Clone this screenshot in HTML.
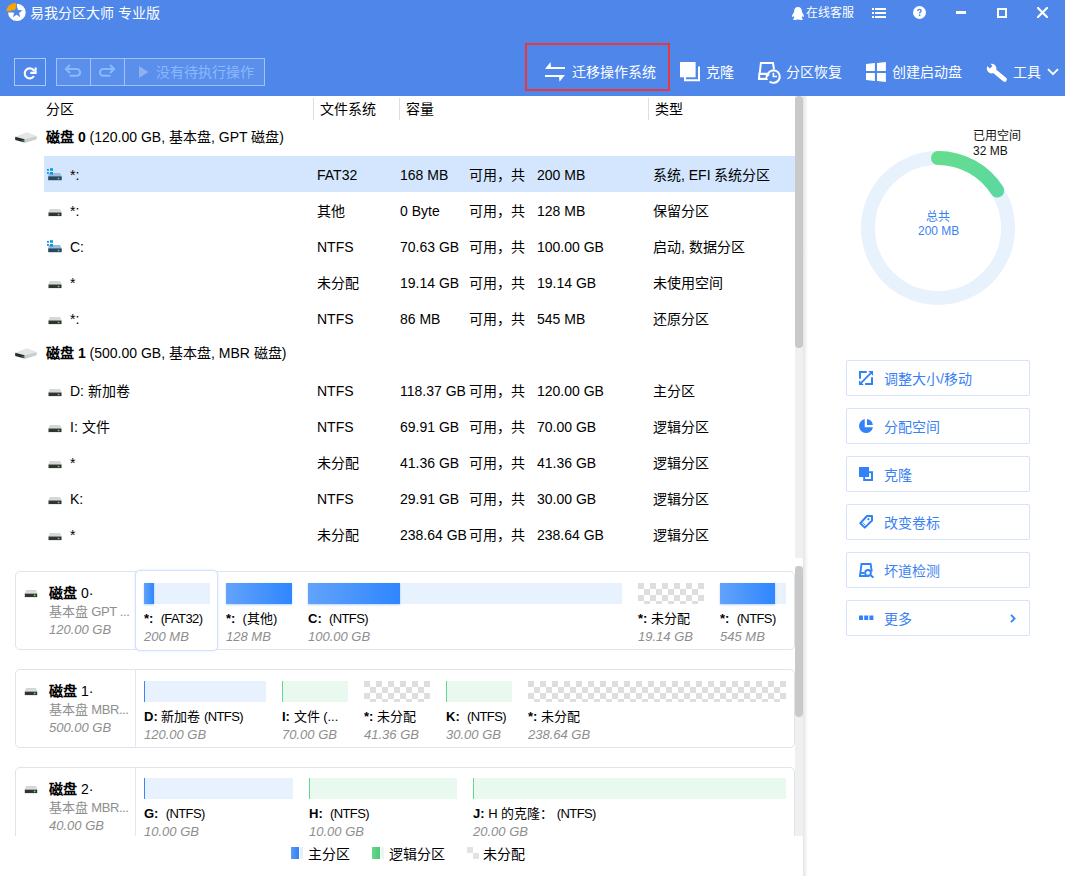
<!DOCTYPE html><html lang="zh-CN"><head><meta charset="utf-8"><style>
*{margin:0;padding:0;box-sizing:border-box}
html,body{width:1065px;height:876px;overflow:hidden;background:#fff;font-family:"Liberation Sans", sans-serif;color:#000;font-weight:300}
.ab{position:absolute;white-space:nowrap}
.t14{font-size:14px;line-height:16px}
.t13{font-size:13px;line-height:15px}
.t12{font-size:12px;line-height:14px}
.hdr{position:absolute;left:0;top:0;width:1065px;height:96px;background:#4e86ea}
.w{color:#fff}
b{font-weight:700}
.btnrow{position:absolute;left:846px;width:184px;height:36px;border:1px solid #d5e4fb;border-radius:2px;background:#fff}
.btnrow .tx{position:absolute;left:37px;top:10px;font-size:14px;line-height:16px;color:#3a82f2}
.btnrow svg{position:absolute;left:12px;top:10px}
.card{position:absolute;left:15px;width:780px;border:1px solid #dde4ec;border-radius:5px;background:#fff}
.bar{position:absolute;height:21px;background:#e7f2fe}
.bluef{position:absolute;left:0;top:0;height:21px;background:linear-gradient(90deg,#62a3fb,#2f86fe);box-shadow:0 1px 2px rgba(47,128,246,.35)}
.grn{position:absolute;height:21px;background:#eaf9ef;border-left:1px solid #62d98e}
.chk{position:absolute;height:21px;background-color:#fff;background-image:linear-gradient(45deg,#dedede 25%,transparent 25%,transparent 75%,#dedede 75%),linear-gradient(45deg,#dedede 25%,transparent 25%,transparent 75%,#dedede 75%);background-size:12px 12px;background-position:6px 0,0 6px}
.lab{position:absolute;font-size:13px;line-height:15px;color:#000;white-space:nowrap}
.sz{position:absolute;font-size:13px;line-height:15px;color:#8e8e8e;font-style:italic;white-space:nowrap}
</style></head><body>

<div class="hdr"></div>
<svg class="ab" style="left:0;top:0" width="30" height="25" viewBox="0 0 30 25">
<path d="M16.9 12.4 L16.9 3.7 A8.8 8.7 0 1 1 8.1 12.4 Z" fill="#fff"/>
<path d="M15.9 11.3 L15.9 2.9 A9.5 8.6 0 0 0 6.4 11.3 Z" fill="#f7a600"/>
<path d="M16.60 5.90 L18.13 10.10 L22.59 10.25 L19.07 13.00 L20.30 17.30 L16.60 14.80 L12.90 17.30 L14.13 13.00 L10.61 10.25 L15.07 10.10 Z" fill="#4e86ea"/>
</svg>
<div class="ab w t14" style="left:30px;top:5px">易我分区大师 专业版</div>
<svg class="ab" style="left:791px;top:7px" width="14" height="13" viewBox="0 0 14 13">
<path d="M7 0 C4.3 0 3.2 2 3.2 4 C3.2 5 2.8 5.6 2.2 6.5 C1.2 7.9 0.6 9.6 1.3 9.9 C1.7 10 2.1 9.5 2.4 9.1 C2.6 9.9 3 10.6 3.5 11.1 C2.6 11.4 1.9 11.9 2.2 12.4 C2.6 13.1 5 13 7 12.5 C9 13 11.4 13.1 11.8 12.4 C12.1 11.9 11.4 11.4 10.5 11.1 C11 10.6 11.4 9.9 11.6 9.1 C11.9 9.5 12.3 10 12.7 9.9 C13.4 9.6 12.8 7.9 11.8 6.5 C11.2 5.6 10.8 5 10.8 4 C10.8 2 9.7 0 7 0 Z" fill="#fff"/>
</svg>
<div class="ab w t12" style="left:806px;top:6px">在线客服</div>
<svg class="ab" style="left:872px;top:8px" width="14" height="10" viewBox="0 0 14 10" fill="#fff">
<rect x="0" y="0" width="2" height="2"/><rect x="3" y="0" width="11" height="2"/>
<rect x="0" y="4" width="2" height="2"/><rect x="3" y="4" width="11" height="2"/>
<rect x="0" y="8" width="2" height="2"/><rect x="3" y="8" width="11" height="2"/>
</svg>
<svg class="ab" style="left:913px;top:6px" width="13" height="13" viewBox="0 0 13 13">
<circle cx="6.5" cy="6.5" r="6.5" fill="#fff"/>
<path d="M4.2 4.9 C4.2 3.5 5.2 2.7 6.5 2.7 C7.9 2.7 8.8 3.5 8.8 4.7 C8.8 6 7.3 6.2 7.3 7.6 L5.9 7.6 C5.9 5.9 7.4 5.6 7.4 4.8 C7.4 4.3 7 4 6.5 4 C6 4 5.6 4.4 5.6 4.9 Z" fill="#4e86ea"/>
<rect x="5.8" y="8.5" width="1.6" height="1.6" fill="#4e86ea"/>
</svg>
<div class="ab" style="left:956px;top:11px;width:10px;height:3px;background:#fff"></div>
<div class="ab" style="left:997px;top:8px;width:9.5px;height:9.5px;border:2px solid #fff"></div>
<svg class="ab" style="left:1037px;top:7px" width="11" height="11" viewBox="0 0 11 11">
<path d="M1 1 L10 10 M10 1 L1 10" stroke="#fff" stroke-width="2.2" stroke-linecap="round"/>
</svg>
<div class="ab" style="left:14px;top:58px;width:32px;height:28px;border:1px solid #a9c7f7"></div>
<svg class="ab" style="left:14px;top:58px" width="32" height="28" viewBox="14 58 32 28">
<path d="M34.2 71.2 A5 5 0 1 0 33.9 76.2" fill="none" stroke="#fff" stroke-width="2.1"/>
<path d="M35.6 67.6 L35.6 72.9 L30.3 72.9" fill="none" stroke="#fff" stroke-width="2.1"/>
</svg>
<div class="ab" style="left:56px;top:58px;width:209px;height:28px;border:1px solid #a4c1f5;background:#5a8fec"></div>
<div class="ab" style="left:90px;top:58px;width:1px;height:28px;background:#a4c1f5"></div>
<div class="ab" style="left:124px;top:58px;width:1px;height:28px;background:#a4c1f5"></div>
<svg class="ab" style="left:57px;top:59px" width="66" height="26" viewBox="57 59 66 26">
<path d="M70.4 75.8 L76.7 75.8 A3.4 3.4 0 0 0 76.7 69 L66 69" fill="none" stroke="#8cb8fc" stroke-width="2.1" stroke-linecap="round"/>
<path d="M69.4 65.6 L65.8 69 L69.4 72.4" fill="none" stroke="#8cb8fc" stroke-width="2.1" stroke-linecap="round" stroke-linejoin="round"/>
<path d="M109.6 75.8 L103.3 75.8 A3.4 3.4 0 0 1 103.3 69 L114 69" fill="none" stroke="#8cb8fc" stroke-width="2.1" stroke-linecap="round"/>
<path d="M110.6 65.6 L114.2 69 L110.6 72.4" fill="none" stroke="#8cb8fc" stroke-width="2.1" stroke-linecap="round" stroke-linejoin="round"/>
</svg>
<svg class="ab" style="left:139px;top:66px" width="10" height="12" viewBox="0 0 10 12">
<path d="M0 0 L9.5 6 L0 12 Z" fill="#8fb0ec"/></svg>
<div class="ab t14" style="left:156px;top:64px;color:#8cb8fc">没有待执行操作</div>
<div class="ab" style="left:525px;top:43px;width:145px;height:48px;border:2px solid #e9383d"></div>
<svg class="ab" style="left:544px;top:61px" width="22" height="22" viewBox="544 61 22 22" fill="#fff">
<path d="M550.6 62 L550.9 66.9 L565 66.9 L565 68.9 L545 68.9 Z"/>
<path d="M545 75 L565 75 L559.5 81.7 L559 77.1 L545 77.1 Z"/>
</svg>
<div class="ab w t14" style="left:572px;top:64px">迁移操作系统</div>
<svg class="ab" style="left:678px;top:60px" width="25" height="24" viewBox="678 60 25 24">
<rect x="680" y="62" width="15.6" height="15.3" fill="#fff"/>
<path d="M699 66.5 L699 80.3 L685 80.3 L685 77" fill="none" stroke="#fff" stroke-width="2"/>
</svg>
<div class="ab w t14" style="left:706px;top:64px">克隆</div>
<svg class="ab" style="left:757px;top:61px" width="25" height="24" viewBox="757 61 25 24">
<path d="M767.5 79 L759.1 79 L760.9 63 L773 63 L774 69" fill="none" stroke="#fff" stroke-width="2"/>
<path d="M758.5 72.7 L768 72.7 L768 80 L758.3 80 Z" fill="#fff"/>
<rect x="760.2" y="75" width="5.5" height="2.8" fill="#4e86ea"/>
<circle cx="773.4" cy="76.4" r="6.4" fill="#4e86ea"/>
<path d="M767.6 74.8 A6.2 6.2 0 1 1 769.6 81.4" fill="none" stroke="#fff" stroke-width="2"/>
<path d="M766 74 L770 74.2 L767.3 77.5 Z" fill="#fff"/>
<path d="M773.4 72.7 L773.4 76.5 L777 76.5" fill="none" stroke="#fff" stroke-width="1.7"/>
</svg>
<div class="ab w t14" style="left:786px;top:64px">分区恢复</div>
<svg class="ab" style="left:862px;top:59px" width="28" height="26" viewBox="862 59 28 26" fill="#fff">
<path d="M866 63.9 L874.9 62.9 L874.9 71 L866 71 Z"/><path d="M877 62.9 L885.9 62 L885.9 71 L877 71 Z"/>
<path d="M866 73 L874.9 73 L874.9 81 L866 80 Z"/><path d="M877 73 L885.9 73 L885.9 82 L877 81 Z"/>
</svg>
<div class="ab w t14" style="left:892px;top:64px">创建启动盘</div>
<svg class="ab" style="left:983px;top:59px" width="28" height="26" viewBox="983 59 28 26">
<path d="M992.5 69.5 L1004.6 79.6" stroke="#fff" stroke-width="4.6" stroke-linecap="round"/>
<circle cx="991.6" cy="68.6" r="4.8" fill="#fff"/>
<path d="M989.6 62.2 L992.4 66.2 L989.8 68.4 L986 64.8 L986.5 63 Z" fill="#4e86ea"/>
</svg>
<div class="ab w t14" style="left:1013px;top:64px">工具</div>
<svg class="ab" style="left:1047px;top:68px" width="12" height="8" viewBox="0 0 12 8">
<path d="M1 1.2 L6 6.2 L11 1.2" fill="none" stroke="#fff" stroke-width="1.9"/></svg>
<div class="ab t14" style="left:46px;top:101px">分区</div>
<div class="ab" style="left:313px;top:98px;width:1px;height:22px;background:#dedede"></div>
<div class="ab t14" style="left:320px;top:101px">文件系统</div>
<div class="ab" style="left:399px;top:98px;width:1px;height:22px;background:#dedede"></div>
<div class="ab t14" style="left:406px;top:101px">容量</div>
<div class="ab" style="left:648px;top:98px;width:1px;height:22px;background:#dedede"></div>
<div class="ab t14" style="left:655px;top:101px">类型</div>
<svg class="ab" style="left:14px;top:131px" width="24" height="13" viewBox="0 0 24 13">
<path d="M1.2 5.7 L12.7 1.2 L22.7 4.9 L10.6 8.3 Z" fill="#e4e5e7"/>
<path d="M1.2 5.7 L10.6 8.3 L10.6 11.6 L1.2 9.1 Z" fill="#2b2b2b"/>
<path d="M10.6 8.3 L22.7 4.9 L22.7 8.3 L10.6 12 Z" fill="#cdcdcd"/>
<rect x="8.2" y="9" width="1.5" height="1.5" fill="#2db52d"/>
</svg>
<div class="ab t14" style="left:46px;top:129px"><b style="font-weight:900">磁盘 0</b> (120.00 GB, 基本盘, GPT 磁盘)</div>
<div class="ab" style="left:44px;top:156px;width:751px;height:36px;background:#d3e6fe"></div>
<svg class="ab" style="left:47px;top:168px" width="16" height="14" viewBox="0 0 16 14"><g fill="#0a9be8"><rect x="0" y="0.9" width="1.9" height="1.9"/><rect x="3" y="0.2" width="3" height="2.6"/><rect x="0" y="4" width="1.9" height="1.9"/><rect x="3" y="4" width="3" height="2.7"/></g><path d="M1.9 5 L13.1 5 L14.7 8.3 L1.2 8.3 Z" fill="#9dbbdc"/><rect x="1.2" y="8.3" width="13.5" height="3.9" fill="#2b4662"/><rect x="10.8" y="9.8" width="1.5" height="1.5" fill="#3fe07a"/><g fill="#0a9be8"><rect x="3" y="4" width="3" height="2.7"/></g></svg>
<div class="ab t14" style="left:70px;top:167px">*:</div>
<div class="ab t14" style="left:317px;top:167px">FAT32</div>
<div class="ab t14" style="left:400px;top:167px">168 MB</div>
<div class="ab t14" style="left:469px;top:167px">可用，共</div>
<div class="ab t14" style="left:537px;top:167px">200 MB</div>
<div class="ab t14" style="left:653px;top:167px">系统, EFI 系统分区</div>
<svg class="ab" style="left:47px;top:204px" width="16" height="14" viewBox="0 0 16 14"><path d="M2.9 4.9 L13 4.9 L14.7 8.4 L1.2 8.4 Z" fill="#d6d7d9"/><rect x="1.5" y="8.5" width="13" height="3.6" fill="#333"/><rect x="10.8" y="9.8" width="1.5" height="1.5" fill="#48f048"/></svg>
<div class="ab t14" style="left:70px;top:203px">*:</div>
<div class="ab t14" style="left:317px;top:203px">其他</div>
<div class="ab t14" style="left:400px;top:203px">0 Byte</div>
<div class="ab t14" style="left:469px;top:203px">可用，共</div>
<div class="ab t14" style="left:537px;top:203px">128 MB</div>
<div class="ab t14" style="left:653px;top:203px">保留分区</div>
<svg class="ab" style="left:47px;top:240px" width="16" height="14" viewBox="0 0 16 14"><g fill="#0a9be8"><rect x="0" y="0.9" width="1.9" height="1.9"/><rect x="3" y="0.2" width="3" height="2.6"/><rect x="0" y="4" width="1.9" height="1.9"/><rect x="3" y="4" width="3" height="2.7"/></g><path d="M1.9 5 L13.1 5 L14.7 8.3 L1.2 8.3 Z" fill="#9dbbdc"/><rect x="1.2" y="8.3" width="13.5" height="3.9" fill="#2b4662"/><rect x="10.8" y="9.8" width="1.5" height="1.5" fill="#3fe07a"/><g fill="#0a9be8"><rect x="3" y="4" width="3" height="2.7"/></g></svg>
<div class="ab t14" style="left:70px;top:239px">C:</div>
<div class="ab t14" style="left:317px;top:239px">NTFS</div>
<div class="ab t14" style="left:400px;top:239px">70.63 GB</div>
<div class="ab t14" style="left:469px;top:239px">可用，共</div>
<div class="ab t14" style="left:537px;top:239px">100.00 GB</div>
<div class="ab t14" style="left:653px;top:239px">启动, 数据分区</div>
<svg class="ab" style="left:47px;top:276px" width="16" height="14" viewBox="0 0 16 14"><path d="M2.9 4.9 L13 4.9 L14.7 8.4 L1.2 8.4 Z" fill="#d6d7d9"/><rect x="1.5" y="8.5" width="13" height="3.6" fill="#333"/><rect x="10.8" y="9.8" width="1.5" height="1.5" fill="#48f048"/></svg>
<div class="ab t14" style="left:70px;top:275px">*</div>
<div class="ab t14" style="left:317px;top:275px">未分配</div>
<div class="ab t14" style="left:400px;top:275px">19.14 GB</div>
<div class="ab t14" style="left:469px;top:275px">可用，共</div>
<div class="ab t14" style="left:537px;top:275px">19.14 GB</div>
<div class="ab t14" style="left:653px;top:275px">未使用空间</div>
<svg class="ab" style="left:47px;top:312px" width="16" height="14" viewBox="0 0 16 14"><path d="M2.9 4.9 L13 4.9 L14.7 8.4 L1.2 8.4 Z" fill="#d6d7d9"/><rect x="1.5" y="8.5" width="13" height="3.6" fill="#333"/><rect x="10.8" y="9.8" width="1.5" height="1.5" fill="#48f048"/></svg>
<div class="ab t14" style="left:70px;top:311px">*:</div>
<div class="ab t14" style="left:317px;top:311px">NTFS</div>
<div class="ab t14" style="left:400px;top:311px">86 MB</div>
<div class="ab t14" style="left:469px;top:311px">可用，共</div>
<div class="ab t14" style="left:537px;top:311px">545 MB</div>
<div class="ab t14" style="left:653px;top:311px">还原分区</div>
<svg class="ab" style="left:14px;top:347px" width="24" height="13" viewBox="0 0 24 13">
<path d="M1.2 5.7 L12.7 1.2 L22.7 4.9 L10.6 8.3 Z" fill="#e4e5e7"/>
<path d="M1.2 5.7 L10.6 8.3 L10.6 11.6 L1.2 9.1 Z" fill="#2b2b2b"/>
<path d="M10.6 8.3 L22.7 4.9 L22.7 8.3 L10.6 12 Z" fill="#cdcdcd"/>
<rect x="8.2" y="9" width="1.5" height="1.5" fill="#2db52d"/>
</svg>
<div class="ab t14" style="left:46px;top:345px"><b style="font-weight:900">磁盘 1</b> (500.00 GB, 基本盘, MBR 磁盘)</div>
<svg class="ab" style="left:47px;top:384px" width="16" height="14" viewBox="0 0 16 14"><path d="M2.9 4.9 L13 4.9 L14.7 8.4 L1.2 8.4 Z" fill="#d6d7d9"/><rect x="1.5" y="8.5" width="13" height="3.6" fill="#333"/><rect x="10.8" y="9.8" width="1.5" height="1.5" fill="#48f048"/></svg>
<div class="ab t14" style="left:70px;top:383px">D: 新加卷</div>
<div class="ab t14" style="left:317px;top:383px">NTFS</div>
<div class="ab t14" style="left:400px;top:383px">118.37 GB</div>
<div class="ab t14" style="left:469px;top:383px">可用，共</div>
<div class="ab t14" style="left:537px;top:383px">120.00 GB</div>
<div class="ab t14" style="left:653px;top:383px">主分区</div>
<svg class="ab" style="left:47px;top:420px" width="16" height="14" viewBox="0 0 16 14"><path d="M2.9 4.9 L13 4.9 L14.7 8.4 L1.2 8.4 Z" fill="#d6d7d9"/><rect x="1.5" y="8.5" width="13" height="3.6" fill="#333"/><rect x="10.8" y="9.8" width="1.5" height="1.5" fill="#48f048"/></svg>
<div class="ab t14" style="left:70px;top:419px">I: 文件</div>
<div class="ab t14" style="left:317px;top:419px">NTFS</div>
<div class="ab t14" style="left:400px;top:419px">69.91 GB</div>
<div class="ab t14" style="left:469px;top:419px">可用，共</div>
<div class="ab t14" style="left:537px;top:419px">70.00 GB</div>
<div class="ab t14" style="left:653px;top:419px">逻辑分区</div>
<svg class="ab" style="left:47px;top:456px" width="16" height="14" viewBox="0 0 16 14"><path d="M2.9 4.9 L13 4.9 L14.7 8.4 L1.2 8.4 Z" fill="#d6d7d9"/><rect x="1.5" y="8.5" width="13" height="3.6" fill="#333"/><rect x="10.8" y="9.8" width="1.5" height="1.5" fill="#48f048"/></svg>
<div class="ab t14" style="left:70px;top:455px">*</div>
<div class="ab t14" style="left:317px;top:455px">未分配</div>
<div class="ab t14" style="left:400px;top:455px">41.36 GB</div>
<div class="ab t14" style="left:469px;top:455px">可用，共</div>
<div class="ab t14" style="left:537px;top:455px">41.36 GB</div>
<div class="ab t14" style="left:653px;top:455px">逻辑分区</div>
<svg class="ab" style="left:47px;top:492px" width="16" height="14" viewBox="0 0 16 14"><path d="M2.9 4.9 L13 4.9 L14.7 8.4 L1.2 8.4 Z" fill="#d6d7d9"/><rect x="1.5" y="8.5" width="13" height="3.6" fill="#333"/><rect x="10.8" y="9.8" width="1.5" height="1.5" fill="#48f048"/></svg>
<div class="ab t14" style="left:70px;top:491px">K:</div>
<div class="ab t14" style="left:317px;top:491px">NTFS</div>
<div class="ab t14" style="left:400px;top:491px">29.91 GB</div>
<div class="ab t14" style="left:469px;top:491px">可用，共</div>
<div class="ab t14" style="left:537px;top:491px">30.00 GB</div>
<div class="ab t14" style="left:653px;top:491px">逻辑分区</div>
<svg class="ab" style="left:47px;top:528px" width="16" height="14" viewBox="0 0 16 14"><path d="M2.9 4.9 L13 4.9 L14.7 8.4 L1.2 8.4 Z" fill="#d6d7d9"/><rect x="1.5" y="8.5" width="13" height="3.6" fill="#333"/><rect x="10.8" y="9.8" width="1.5" height="1.5" fill="#48f048"/></svg>
<div class="ab t14" style="left:70px;top:527px">*</div>
<div class="ab t14" style="left:317px;top:527px">未分配</div>
<div class="ab t14" style="left:400px;top:527px">238.64 GB</div>
<div class="ab t14" style="left:469px;top:527px">可用，共</div>
<div class="ab t14" style="left:537px;top:527px">238.64 GB</div>
<div class="ab t14" style="left:653px;top:527px">逻辑分区</div>
<div class="ab" style="left:795px;top:96px;width:8px;height:462px;background:#f0f0f0"></div>
<div class="ab" style="left:795px;top:96px;width:8px;height:252px;background:#c9c9c9;border-radius:4px"></div>
<div class="ab" style="left:0;top:558px;width:795px;height:278px;overflow:hidden">
<div class="card" style="top:13px;height:79px"></div>
<div class="ab" style="left:135px;top:13px;width:1px;height:79px;background:#e1e8f0"></div>
<svg class="ab" style="left:24px;top:31px" width="14" height="9" viewBox="0 0 14 9"><defs><linearGradient id="mg13" x1="0" y1="0" x2="0" y2="1"><stop offset="0" stop-color="#cfd1d4"/><stop offset="1" stop-color="#e2e3e5"/></linearGradient></defs><path d="M2.2 1 L11.9 1 L13.6 4.6 L0.4 4.6 Z" fill="url(#mg13)"/><rect x="0.8" y="4.6" width="12.4" height="3.5" fill="#343434"/><circle cx="10.6" cy="6.4" r="0.9" fill="#4cf24c"/></svg>
<div class="ab" style="left:49px;top:27px;font-size:14px;line-height:16px;color:#000"><b style="font-weight:900">磁盘</b> 0·</div>
<div class="ab" style="left:49px;top:46px;font-size:13px;line-height:15px;color:#8e8e8e">基本盘<span style="letter-spacing:-0.4px"> GPT ...</span></div>
<div class="sz" style="left:49px;top:64px">120.00 GB</div>
<div class="ab" style="left:135px;top:12px;width:83px;height:81px;border:1px solid #d2e2fb;border-radius:5px;box-shadow:0 0 3px #dde9fc;background:#fff"></div>
<div class="bar" style="left:144px;top:25px;width:66px"><div class="bluef" style="width:10px"></div></div>
<div class="lab" style="left:144px;top:53px"><b>*:</b>&nbsp;&nbsp;<span style="letter-spacing:-0.6px">(FAT32)</span></div>
<div class="sz" style="left:144px;top:71px">200 MB</div>
<div class="bar" style="left:226px;top:25px;width:66px"><div class="bluef" style="width:66px"></div></div>
<div class="lab" style="left:226px;top:53px"><b>*:</b>&nbsp;&nbsp;(其他)</div>
<div class="sz" style="left:226px;top:71px">128 MB</div>
<div class="bar" style="left:308px;top:25px;width:314px"><div class="bluef" style="width:92px"></div></div>
<div class="lab" style="left:308px;top:53px"><b>C:</b>&nbsp;&nbsp;<span style="letter-spacing:-0.6px">(NTFS)</span></div>
<div class="sz" style="left:308px;top:71px">100.00 GB</div>
<div class="chk" style="left:638px;top:25px;width:66px"></div>
<div class="lab" style="left:638px;top:53px"><b>*:</b> 未分配</div>
<div class="sz" style="left:638px;top:71px">19.14 GB</div>
<div class="bar" style="left:720px;top:25px;width:66px"><div class="bluef" style="width:55px"></div></div>
<div class="lab" style="left:720px;top:53px"><b>*:</b>&nbsp;&nbsp;<span style="letter-spacing:-0.6px">(NTFS)</span></div>
<div class="sz" style="left:720px;top:71px">545 MB</div>
<div class="card" style="top:111px;height:79px"></div>
<div class="ab" style="left:135px;top:111px;width:1px;height:79px;background:#e1e8f0"></div>
<svg class="ab" style="left:24px;top:129px" width="14" height="9" viewBox="0 0 14 9"><defs><linearGradient id="mg111" x1="0" y1="0" x2="0" y2="1"><stop offset="0" stop-color="#cfd1d4"/><stop offset="1" stop-color="#e2e3e5"/></linearGradient></defs><path d="M2.2 1 L11.9 1 L13.6 4.6 L0.4 4.6 Z" fill="url(#mg111)"/><rect x="0.8" y="4.6" width="12.4" height="3.5" fill="#343434"/><circle cx="10.6" cy="6.4" r="0.9" fill="#4cf24c"/></svg>
<div class="ab" style="left:49px;top:125px;font-size:14px;line-height:16px;color:#000"><b style="font-weight:900">磁盘</b> 1·</div>
<div class="ab" style="left:49px;top:144px;font-size:13px;line-height:15px;color:#8e8e8e">基本盘<span style="letter-spacing:-0.4px"> MBR...</span></div>
<div class="sz" style="left:49px;top:162px">500.00 GB</div>
<div class="bar" style="left:144px;top:123px;width:122px"><div class="ab" style="left:0;top:0;width:1px;height:21px;background:#3f86f0"></div></div>
<div class="lab" style="left:144px;top:151px"><b>D:</b> 新加卷 <span style="letter-spacing:-0.6px">(NTFS)</span></div>
<div class="sz" style="left:144px;top:169px">120.00 GB</div>
<div class="grn" style="left:282px;top:123px;width:66px"></div>
<div class="lab" style="left:282px;top:151px"><b>I:</b> 文件 (...</div>
<div class="sz" style="left:282px;top:169px">70.00 GB</div>
<div class="chk" style="left:364px;top:123px;width:66px"></div>
<div class="lab" style="left:364px;top:151px"><b>*:</b> 未分配</div>
<div class="sz" style="left:364px;top:169px">41.36 GB</div>
<div class="grn" style="left:446px;top:123px;width:66px"></div>
<div class="lab" style="left:446px;top:151px"><b>K:</b>&nbsp;&nbsp;<span style="letter-spacing:-0.6px">(NTFS)</span></div>
<div class="sz" style="left:446px;top:169px">30.00 GB</div>
<div class="chk" style="left:528px;top:123px;width:258px"></div>
<div class="lab" style="left:528px;top:151px"><b>*:</b> 未分配</div>
<div class="sz" style="left:528px;top:169px">238.64 GB</div>
<div class="card" style="top:209px;height:79px"></div>
<div class="ab" style="left:135px;top:209px;width:1px;height:79px;background:#e1e8f0"></div>
<svg class="ab" style="left:24px;top:227px" width="14" height="9" viewBox="0 0 14 9"><defs><linearGradient id="mg209" x1="0" y1="0" x2="0" y2="1"><stop offset="0" stop-color="#cfd1d4"/><stop offset="1" stop-color="#e2e3e5"/></linearGradient></defs><path d="M2.2 1 L11.9 1 L13.6 4.6 L0.4 4.6 Z" fill="url(#mg209)"/><rect x="0.8" y="4.6" width="12.4" height="3.5" fill="#343434"/><circle cx="10.6" cy="6.4" r="0.9" fill="#4cf24c"/></svg>
<div class="ab" style="left:49px;top:223px;font-size:14px;line-height:16px;color:#000"><b style="font-weight:900">磁盘</b> 2·</div>
<div class="ab" style="left:49px;top:242px;font-size:13px;line-height:15px;color:#8e8e8e">基本盘<span style="letter-spacing:-0.4px"> MBR...</span></div>
<div class="sz" style="left:49px;top:260px">40.00 GB</div>
<div class="bar" style="left:144px;top:220px;width:149px"><div class="ab" style="left:0;top:0;width:1px;height:21px;background:#3f86f0"></div></div>
<div class="lab" style="left:144px;top:248px"><b>G:</b>&nbsp;&nbsp;<span style="letter-spacing:-0.6px">(NTFS)</span></div>
<div class="sz" style="left:144px;top:266px">10.00 GB</div>
<div class="grn" style="left:309px;top:220px;width:148px"></div>
<div class="lab" style="left:309px;top:248px"><b>H:</b>&nbsp;&nbsp;<span style="letter-spacing:-0.6px">(NTFS)</span></div>
<div class="sz" style="left:309px;top:266px">10.00 GB</div>
<div class="grn" style="left:473px;top:220px;width:313px"></div>
<div class="lab" style="left:473px;top:248px"><b>J:</b> H 的克隆：&nbsp;<span style="letter-spacing:-0.6px">(NTFS)</span></div>
<div class="sz" style="left:473px;top:266px">20.00 GB</div>
</div>
<div class="ab" style="left:795px;top:566px;width:8px;height:270px;background:#f0f0f0"></div>
<div class="ab" style="left:795px;top:566px;width:8px;height:151px;background:#c9c9c9;border-radius:4px"></div>
<div class="ab" style="left:291px;top:847px;width:8px;height:12px;background:linear-gradient(90deg,#5a9cf8,#2f80f6)"></div>
<div class="ab" style="left:300px;top:847px;width:3px;height:12px;background:#e6f0fd"></div>
<div class="ab t14" style="left:308px;top:846px">主分区</div>
<div class="ab" style="left:372px;top:847px;width:8px;height:12px;background:linear-gradient(90deg,#6ad58c,#4cc978)"></div>
<div class="ab" style="left:381px;top:847px;width:3px;height:12px;background:#e8f8ee"></div>
<div class="ab t14" style="left:389px;top:846px">逻辑分区</div>
<div class="ab" style="left:467px;top:847px;width:6px;height:6px;background:#e3e3e3"></div>
<div class="ab" style="left:473px;top:853px;width:6px;height:6px;background:#e3e3e3"></div>
<div class="ab t14" style="left:483px;top:846px">未分配</div>
<div class="ab" style="left:803px;top:96px;width:5px;height:780px;background:linear-gradient(90deg,#e4e4e4,#fff)"></div>
<svg class="ab" style="left:858px;top:148px" width="160" height="160" viewBox="0 0 160 160">
<defs><linearGradient id="g" x1="0" y1="0" x2="1" y2="1"><stop offset="0" stop-color="#64dd8f"/><stop offset="1" stop-color="#5cd8a0"/></linearGradient></defs>
<circle cx="80" cy="80" r="70" fill="none" stroke="#e8f2fd" stroke-width="14"/>
<path d="M80 10 A70 70 0 0 1 139.2 42.6" fill="none" stroke="url(#g)" stroke-width="14" stroke-linecap="round"/>
</svg>
<div class="ab t12" style="left:926px;top:210px;color:#3b82f0">总共</div>
<div class="ab t12" style="left:918px;top:224px;color:#3b82f0">200 MB</div>
<div class="ab t12" style="left:973px;top:129px;color:#111">已用空间</div>
<div class="ab t12" style="left:973px;top:144px;color:#111">32 MB</div>
<div class="btnrow" style="top:360px"><svg width="14" height="14" viewBox="0 0 14 14" fill="#3283fa"><path d="M0 0 L7.8 0 L7.8 2 L2 2 L2 7.8 L0 7.8 Z"/><path d="M14 14 L6.1 14 L6.1 12 L12 12 L12 6.2 L14 6.2 Z"/><path d="M9.2 0 L14 0 L14 4.8 Z"/><path d="M0 9.2 L0 14 L4.8 14 Z"/><path d="M1.5 11.2 L11.2 1.5 L12.5 2.8 L2.8 12.5 Z"/></svg><div class="tx">调整大小/移动</div>
</div>
<div class="btnrow" style="top:408px"><svg width="14" height="14" viewBox="0 0 14 14" fill="#3283fa"><path d="M5.75 0.05 A7 7 0 1 0 13.95 8.15 L5.75 8.15 Z"/><path d="M8 0.1 L8 5.9 L13.85 5.9 A7 7 0 0 0 8 0.1 Z"/></svg><div class="tx">分配空间</div>
</div>
<div class="btnrow" style="top:456px"><svg width="14" height="14" viewBox="0 0 14 14"><rect x="0" y="0" width="10" height="10" fill="#3283fa"/><path d="M10 5.2 L13 5.2 L13 13 L5.2 13 L5.2 10" fill="none" stroke="#3283fa" stroke-width="2"/></svg><div class="tx">克隆</div>
</div>
<div class="btnrow" style="top:504px"><svg width="14" height="14" viewBox="0 0 14 14"><path d="M8 1 L13 1 L13 5.5 L5.8 12.6 L1.3 8.2 Z" fill="none" stroke="#3283fa" stroke-width="2" stroke-linejoin="round"/><circle cx="9.4" cy="4.2" r="1.1" fill="#3283fa"/><path d="M3.5 7.5 L6.5 10.5" stroke="#3283fa" stroke-width="0.8"/></svg><div class="tx">改变卷标</div>
</div>
<div class="btnrow" style="top:552px"><svg width="15" height="15" viewBox="0 0 15 15"><path d="M10 13 L0.95 13 L2.5 0.95 L11.6 0.95 L12.8 8.5" fill="none" stroke="#3283fa" stroke-width="1.9"/><path d="M1.2 10 L5.5 10" stroke="#3283fa" stroke-width="1.9"/><circle cx="9" cy="9.9" r="2.85" fill="#fff" stroke="#3283fa" stroke-width="1.9"/><path d="M11.2 12 L13.8 14" stroke="#3283fa" stroke-width="2" stroke-linecap="round"/></svg><div class="tx">坏道检测</div>
</div>
<div class="btnrow" style="top:600px"><svg width="15" height="14" viewBox="0 0 15 14" fill="#3283fa"><rect x="0" y="4.5" width="4" height="4.5"/><rect x="5.2" y="4.5" width="4" height="4.5"/><rect x="10.4" y="4.5" width="4" height="4.5"/></svg><div class="tx">更多</div>
<svg style="position:absolute;left:163px;top:13px" width="6" height="9" viewBox="0 0 6 9"><path d="M1 0.8 L4.6 4.5 L1 8.2" fill="none" stroke="#3283fa" stroke-width="1.8"/></svg>
</div>
</body></html>
